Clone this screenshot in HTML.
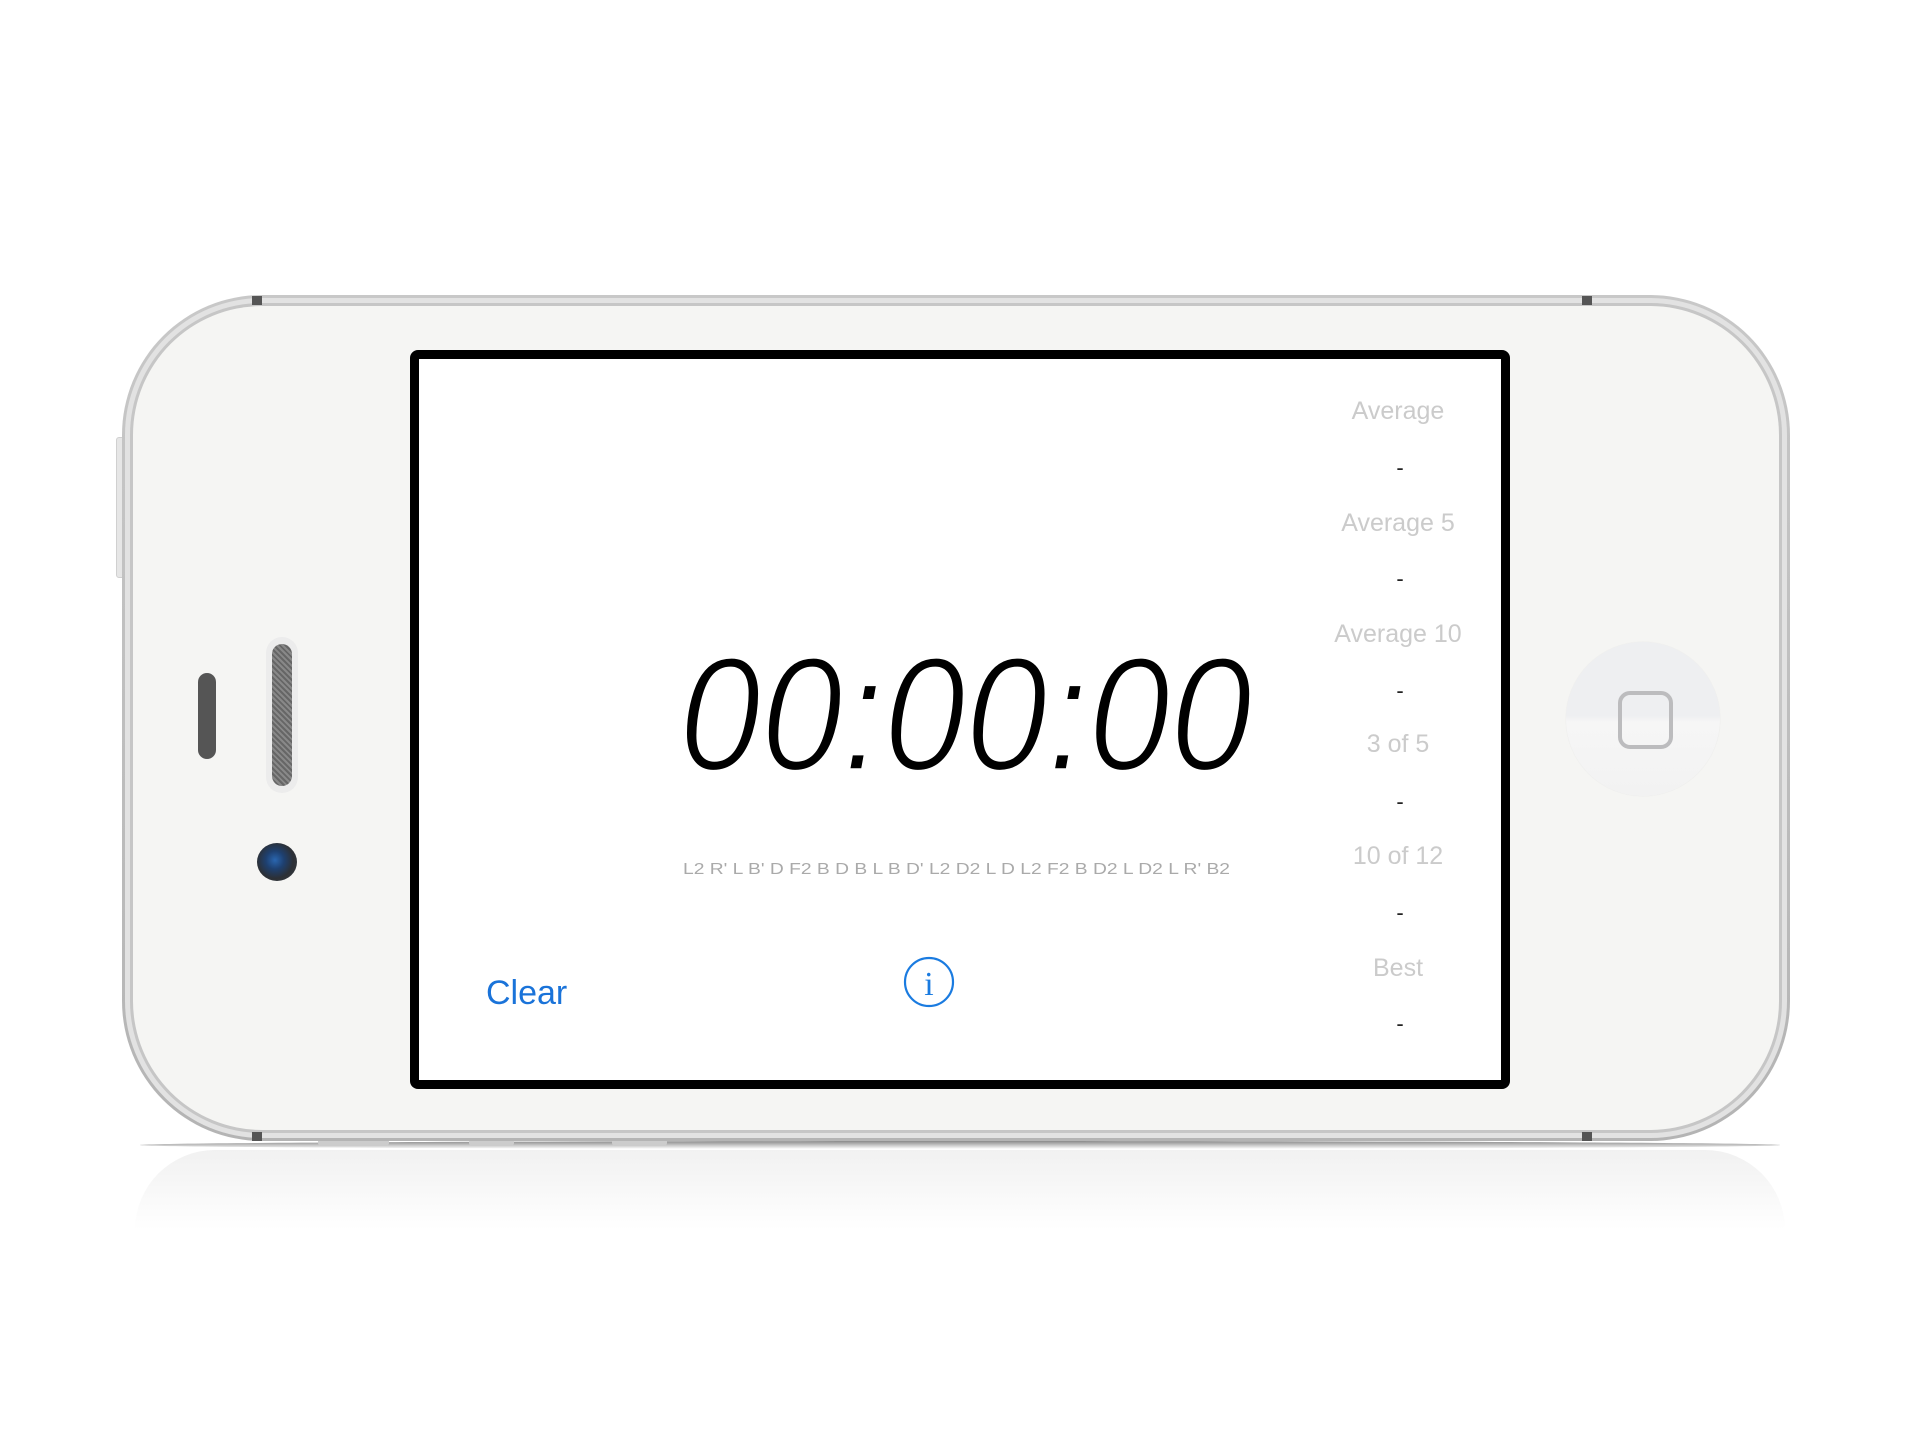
<!DOCTYPE html>
<html><head><meta charset="utf-8"><style>
html,body{margin:0;padding:0;background:#fff;width:1920px;height:1440px;overflow:hidden;font-family:"Liberation Sans",sans-serif}
.abs{position:absolute}
</style></head><body>
<div class="abs" style="left:140px;top:1141px;width:1640px;height:8px;background:linear-gradient(#8a8a8a,rgba(200,200,200,0));border-radius:50%"></div>
<div class="abs" style="left:135px;top:1150px;width:1650px;height:80px;background:linear-gradient(#f1f1f1,#fff);border-radius:120px 120px 0 0"></div>
<div class="abs" style="left:116px;top:437px;width:12px;height:139px;background:#e6e6e6;border:1px solid #d0d0d0;border-radius:3px"></div>
<div class="abs" style="left:122px;top:295px;width:1668px;height:846px;border-radius:140px;background:linear-gradient(#c8c8c8,#b4b4b4);"></div>
<div class="abs" style="left:125px;top:298px;width:1662px;height:840px;border-radius:137px;background:#e2e2e2"></div>
<div class="abs" style="left:130px;top:303px;width:1652px;height:830px;border-radius:132px;background:#c6c6c6"></div>
<div class="abs" style="left:133px;top:306px;width:1646px;height:824px;border-radius:129px;background:#f5f5f3"></div>
<div class="abs" style="left:252px;top:296px;width:10px;height:9px;background:#555"></div>
<div class="abs" style="left:1582px;top:296px;width:10px;height:9px;background:#555"></div>
<div class="abs" style="left:252px;top:1132px;width:10px;height:9px;background:#555"></div>
<div class="abs" style="left:1582px;top:1132px;width:10px;height:9px;background:#555"></div>
<div class="abs" style="left:198px;top:673px;width:18px;height:86px;border-radius:9px;background:#555"></div>
<div class="abs" style="left:266px;top:637px;width:32px;height:156px;border-radius:16px;background:#ececec"></div>
<div class="abs" style="left:272px;top:644px;width:20px;height:142px;border-radius:10px;background:repeating-linear-gradient(45deg,#666 0 2px,#888 2px 4px)"></div>
<div class="abs" style="left:257px;top:843px;width:40px;height:38px;border-radius:50%;background:radial-gradient(circle at 45% 45%,#2a66b0 0,#1e4070 30%,#2c3036 60%,#3a3d42 100%)"></div>
<div class="abs" style="left:1566px;top:642px;width:154px;height:154px;border-radius:50%;background:linear-gradient(#eeeff1 0%,#eeeff1 48%,#f6f6f6 52%,#f2f2f2 100%);box-shadow:0 0 1px #ddd"></div>
<div class="abs" style="left:1618px;top:691px;width:47px;height:50px;border:4px solid #bcbcbe;border-radius:12px"></div>
<div class="abs" style="left:410px;top:350px;width:1100px;height:739px;background:#000;border-radius:8px"></div>
<div class="abs" style="left:419px;top:359px;width:1082px;height:721px;background:#fff"></div>
<svg class="abs" style="left:0;top:0" width="1920" height="1440">
<text x="679" y="770" font-family="Liberation Sans" font-style="italic" font-size="162" textLength="573" lengthAdjust="spacingAndGlyphs" fill="#000" stroke="#fff" stroke-width="3.5">00:00:00</text>
<text x="683" y="874" font-family="Liberation Sans" font-size="16" textLength="547" lengthAdjust="spacingAndGlyphs" fill="#aaa">L2 R' L B' D F2 B D B L B D' L2 D2 L D L2 F2 B D2 L D2 L R' B2</text>
<circle cx="929" cy="982" r="24" fill="none" stroke="#1a7be0" stroke-width="2.2"/>
<text x="929" y="995" text-anchor="middle" font-family="Liberation Serif" font-size="34" fill="#1a7be0">i</text>
<text x="486" y="1004" font-family="Liberation Sans" font-size="34" fill="#1a73d9">Clear</text>
<g font-family="Liberation Sans" font-size="25" fill="#cbcbcb" text-anchor="middle">
<text x="1398" y="419">Average</text>
<text x="1398" y="531">Average 5</text>
<text x="1398" y="642">Average 10</text>
<text x="1398" y="752">3 of 5</text>
<text x="1398" y="864">10 of 12</text>
<text x="1398" y="976">Best</text>
</g>
<g font-family="Liberation Sans" font-size="22" fill="#222" text-anchor="middle">
<text x="1400" y="475">-</text>
<text x="1400" y="586">-</text>
<text x="1400" y="698">-</text>
<text x="1400" y="809">-</text>
<text x="1400" y="920">-</text>
<text x="1400" y="1031">-</text>
</g>
</svg>
<div class="abs" style="left:318px;top:1141px;width:71px;height:5px;background:#ccc;border-radius:0 0 3px 3px"></div>
<div class="abs" style="left:469px;top:1141px;width:45px;height:5px;background:#ccc;border-radius:0 0 3px 3px"></div>
<div class="abs" style="left:612px;top:1141px;width:55px;height:5px;background:#ccc;border-radius:0 0 3px 3px"></div>
</body></html>
